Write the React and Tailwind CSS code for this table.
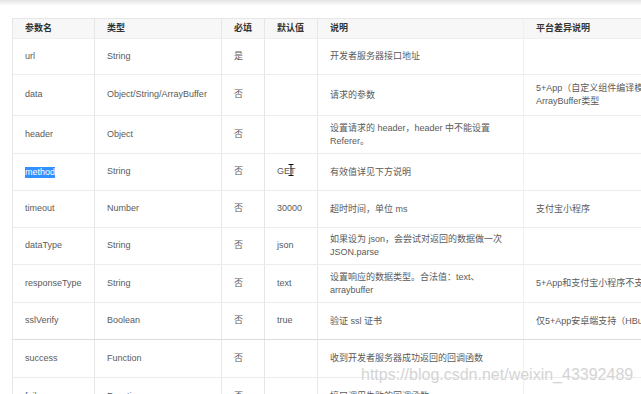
import React from "react";

const rows = [
  { h: 36, c: ["url", "String", "是", "", ["开发者服务器接口地址"], [""]] },
  { h: 41, c: ["data", "Object/String/ArrayBuffer", "否", "", ["请求的参数"], ["5+App（自定义组件编译模式）不支持", "ArrayBuffer类型"]] },
  { h: 38, c: ["header", "Object", "否", "", ["设置请求的 header，header 中不能设置", "Referer。"], [""]] },
  { h: 37, c: ["method", "String", "否", "GET", ["有效值详见下方说明"], [""]], sel: true },
  { h: 37, c: ["timeout", "Number", "否", "30000", ["超时时间，单位 ms"], ["支付宝小程序"]] },
  { h: 37, c: ["dataType", "String", "否", "json", ["如果设为 json，会尝试对返回的数据做一次", "JSON.parse"], [""]] },
  { h: 38, c: ["responseType", "String", "否", "text", ["设置响应的数据类型。合法值：text、", "arraybuffer"], ["5+App和支付宝小程序不支持"]] },
  { h: 37, c: ["sslVerify", "Boolean", "否", "true", ["验证 ssl 证书"], ["仅5+App安卓端支持（HBuilderX 2.3.3+）"]], darkBottom: true },
  { h: 38, c: ["success", "Function", "否", "", ["收到开发者服务器成功返回的回调函数"], [""]] },
  { h: 38, c: ["fail", "Function", "否", "", ["接口调用失败的回调函数"], [""]] },
];

function Lines({ lines }) {
  return (
    <div className="leading-[13px]">
      {lines.map((l, i) => (
        <div key={i} className="whitespace-nowrap">{l}</div>
      ))}
    </div>
  );
}

export default function App() {
  return (
    <div
      className="relative w-[641px] h-[394px] overflow-hidden bg-white text-[9px] text-[#5a5a5a]"
      style={{ fontFamily: '"Liberation Sans", "Noto Sans CJK SC", sans-serif' }}
    >
      <div className="h-[6px] bg-gradient-to-b from-[#e4e4e4] to-white" />
      <div className="pt-[12px] pl-[12px]">
        <div className="w-[760px] border-t border-l border-[#e6e6e6]">
          <div className="flex h-[20px] bg-[#f7f7f7] font-bold text-[#333] border-b border-[#efefef]">
            <div className="w-[82px] flex items-center pl-[12px] border-r border-[#e6e6e6]">参数名</div>
            <div className="w-[127px] flex items-center pl-[12px] border-r border-[#e6e6e6]">类型</div>
            <div className="w-[43px] flex items-center pl-[12px] border-r border-[#e6e6e6]">必填</div>
            <div className="w-[53px] flex items-center pl-[12px] border-r border-[#e6e6e6]">默认值</div>
            <div className="w-[206px] flex items-center pl-[12px] border-r border-[#f0f0f0]">说明</div>
            <div className="flex-1 flex items-center pl-[12px]">平台差异说明</div>
          </div>
          {rows.map((r, i) => (
            <div
              key={i}
              className={`flex border-b ${r.darkBottom ? "border-[#dcdcdc]" : "border-[#ececec]"}`}
              style={{ height: r.h }}
            >
              <div className="w-[82px] flex items-center pl-[12px] border-r border-[#e6e6e6]">
                {r.sel ? (
                  <span className="bg-[#3390ff] text-white leading-[11px]">{r.c[0]}</span>
                ) : (
                  r.c[0]
                )}
              </div>
              <div className="w-[127px] flex items-center pl-[12px] border-r border-[#e6e6e6]">{r.c[1]}</div>
              <div className="w-[43px] flex items-center pl-[12px] border-r border-[#e6e6e6]">{r.c[2]}</div>
              <div className="w-[53px] flex items-center pl-[12px] border-r border-[#e6e6e6]">
                {r.c[3] === "GET" ? (
                  <span className="relative">
                    GET
                    <svg className="absolute left-[11px] top-[-1px]" width="6" height="12" viewBox="0 0 6 12">
                      <path d="M0.5 0.5h5M0.5 11.5h5M3 0.5v11" stroke="#111" strokeWidth="1" fill="none" />
                    </svg>
                  </span>
                ) : (
                  r.c[3]
                )}
              </div>
              <div className="w-[206px] flex items-center pl-[12px] border-r border-[#f0f0f0]">
                <Lines lines={r.c[4]} />
              </div>
              <div className="flex-1 flex items-center pl-[12px]">
                <Lines lines={r.c[5]} />
              </div>
            </div>
          ))}
        </div>
      </div>
      <div
        className="absolute left-[361px] top-[366px] text-[16px] leading-[18px] text-[#d4d4d4] whitespace-nowrap"
        style={{ textShadow: "0 0 1px #fff" }}
      >
        https://blog.csdn.net/weixin_43392489
      </div>
    </div>
  );
}
